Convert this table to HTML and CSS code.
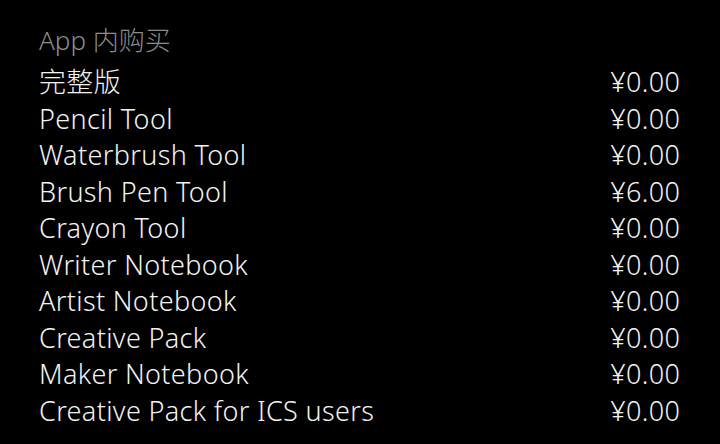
FILE: index.html
```html
<!DOCTYPE html>
<html lang="zh-CN">
<head>
  <meta charset="UTF-8" />
  <title>App 内购买</title>
  <link rel="stylesheet" href="styles.css">
</head>
<body>
  <div class="section">
    <h2 class="section-title">App 内购买</h2>
    <ul class="iap-list">
      <li><span>完整版</span><span class="price">¥0.00</span></li>
      <li><span>Pencil Tool</span><span class="price">¥0.00</span></li>
      <li><span>Waterbrush Tool</span><span class="price">¥0.00</span></li>
      <li><span>Brush Pen Tool</span><span class="price">¥6.00</span></li>
      <li><span>Crayon Tool</span><span class="price">¥0.00</span></li>
      <li><span>Writer Notebook</span><span class="price">¥0.00</span></li>
      <li><span>Artist Notebook</span><span class="price">¥0.00</span></li>
      <li><span>Creative Pack</span><span class="price">¥0.00</span></li>
      <li><span>Maker Notebook</span><span class="price">¥0.00</span></li>
      <li><span>Creative Pack for ICS users</span><span class="price">¥0.00</span></li>
    </ul>
  </div>
</body>
</html>
```
FILE: styles.css
```css
body {
  margin: 0;
  background: #000;
  color: #f2f2f2;
  font-family: "Noto Sans", "Noto Sans CJK SC", sans-serif;
  font-weight: 300;
}

.section {
  padding: 22px 40px 0 39px;
}

.section-title {
  margin: 0;
  font-size: 26px;
  font-weight: 300;
  line-height: 36px;
  color: #8c8c8c;
}

.iap-list {
  list-style: none;
  margin: 6px 0 0;
  padding: 0;
}

.iap-list li {
  display: flex;
  justify-content: space-between;
  font-size: 27px;
  line-height: 36.5px;
  letter-spacing: 0.35px;
}

.price {
  margin-right: -0.35px;
}
```
